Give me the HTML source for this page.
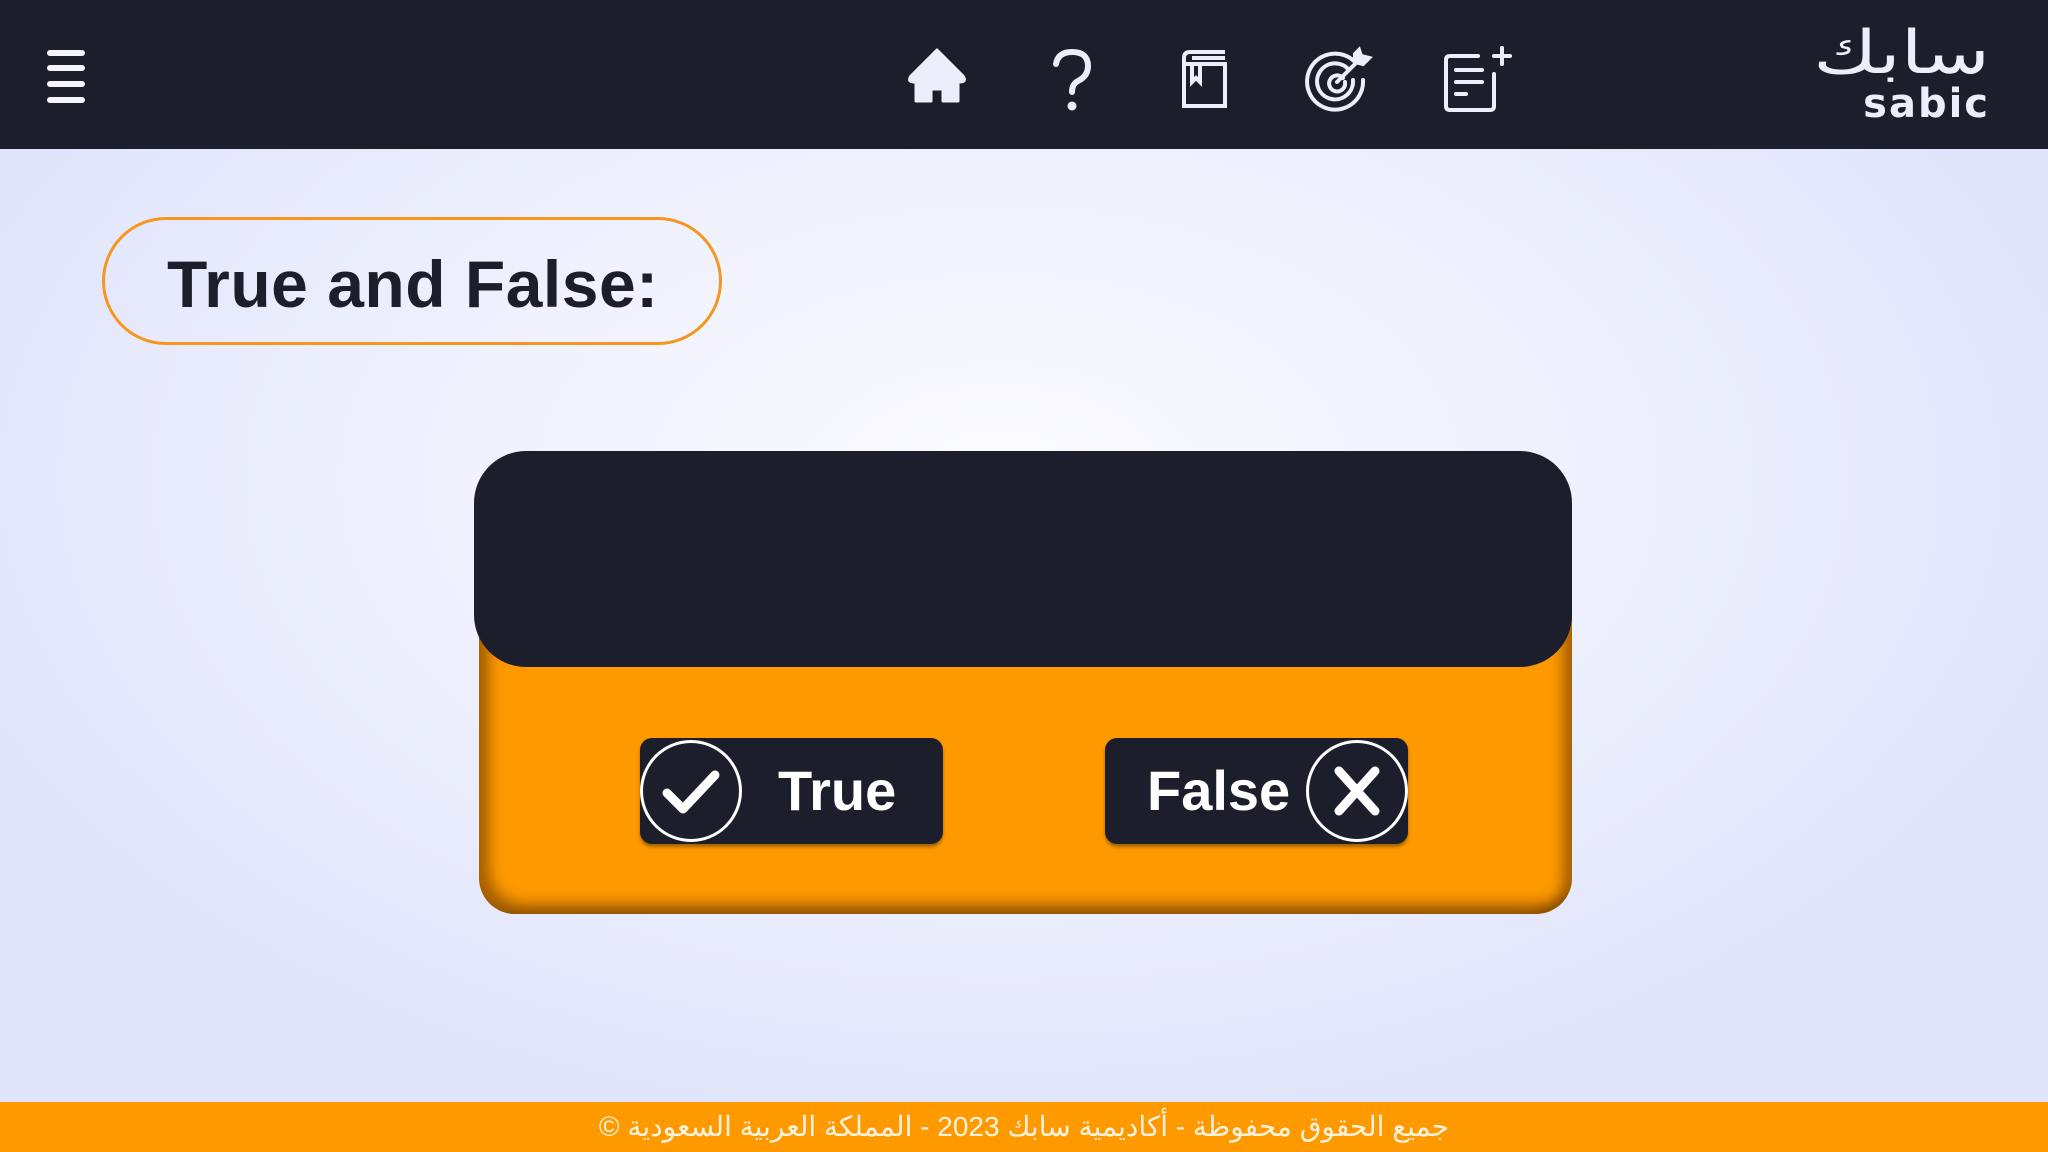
<!DOCTYPE html>
<html><head><meta charset="utf-8"><style>
*{margin:0;padding:0;box-sizing:border-box}
body{width:2048px;height:1152px;overflow:hidden;position:relative;font-family:"Liberation Sans",sans-serif;
background:radial-gradient(ellipse 1100px 650px at 1000px 480px,#fbfbff 0%,#eef0fd 55%,#e1e5fb 100%);}
.hdr{position:absolute;left:0;top:0;width:2048px;height:149px;background:#1c1f2b}
.pill{position:absolute;left:102px;top:217px;width:620px;height:128px;border:3px solid #f7961e;border-radius:64px;}
.pill span{position:absolute;left:62px;top:26px;font-size:66px;font-weight:bold;color:#1c1f2b;letter-spacing:0.5px}
.orange{position:absolute;left:479px;top:600px;width:1093px;height:314px;background:#ff9900;border-radius:0 0 36px 36px;
box-shadow:inset 10px -10px 14px rgba(90,50,0,.55),inset -10px 0 12px rgba(90,50,0,.5);}
.dark{position:absolute;left:474px;top:451px;width:1098px;height:216px;background:#1c1f2b;border-radius:52px}
.btn{position:absolute;top:738px;width:303px;height:106px;background:#1c1f2b;border-radius:12px;color:#fff;font-weight:bold;font-size:56px;box-shadow:0 3px 3px rgba(0,0,0,.35)}
.circ{position:absolute;top:2px;width:102px;height:102px;border:3px solid #fff;border-radius:50%;background:#1c1f2b}
.foot{position:absolute;left:0;top:1102px;width:2048px;height:50px;background:#ff9900;color:#fff3e0;text-align:center;font-size:28px;line-height:50px;font-family:"Liberation Sans","Noto Sans CJK SC",sans-serif}
</style></head><body>
<div class="hdr">
<svg style="position:absolute;left:46px;top:48px" width="40" height="58" viewBox="0 0 40 58"><g stroke="#f2f3fb" stroke-width="6" stroke-linecap="round"><line x1="4" y1="5" x2="36" y2="5"/><line x1="4" y1="20" x2="36" y2="20"/><line x1="4" y1="36" x2="36" y2="36"/><line x1="4" y1="52" x2="36" y2="52"/></g></svg>
<svg style="position:absolute;left:905px;top:46px" width="64" height="60" viewBox="0 0 64 60"><path d="M32 4 L6 30 Q2 36 9 36 L11 36 L11 55 L26 55 L26 43 L38 43 L38 55 L53 55 L53 36 L55 36 Q62 36 58 30 Z" fill="#eceefb" stroke="#eceefb" stroke-width="3" stroke-linejoin="round"/></svg>
<svg style="position:absolute;left:1050px;top:48px" width="44" height="66" viewBox="0 0 44 66"><path d="M6 16 Q8 4 22 4 Q38 4 38 18 Q38 28 28 33 Q22 36 22 44" fill="none" stroke="#eceefb" stroke-width="6" stroke-linecap="round"/><circle cx="22" cy="58" r="4.5" fill="#eceefb"/></svg>
<svg style="position:absolute;left:1180px;top:48px" width="50" height="62" viewBox="0 0 50 62"><g fill="none" stroke="#eceefb" stroke-width="4"><path d="M4 58 V10 Q4 4 10 4 H45"/><path d="M12 10 H45"/><rect x="4" y="16" width="41" height="42"/><path d="M12 16 V34 L16 30 L20 34 V16"/></g></svg>
<svg style="position:absolute;left:1303px;top:46px" width="72" height="68" viewBox="0 0 72 68"><g fill="none" stroke="#eceefb" stroke-width="4" stroke-linecap="round"><path d="M52 16 A28 28 0 1 0 60 34"/><path d="M46 24 A18 18 0 1 0 50 34"/><path d="M40 32 A8 8 0 1 0 42 36"/><path d="M34 36 L58 12"/><path d="M52 8 L52 16 L60 18 L66 12 L58 10 L56 4 Z" fill="#eceefb"/></g></svg>
<svg style="position:absolute;left:1442px;top:44px" width="70" height="68" viewBox="0 0 70 68"><g fill="none" stroke="#eceefb" stroke-width="4" stroke-linecap="round"><path d="M36 12 H8 Q4 12 4 16 V62 Q4 66 8 66 H48 Q52 66 52 62 V30"/><path d="M14 26 H40 M14 38 H40 M14 50 H24"/><path d="M60 4 V20 M52 12 H68"/></g></svg>
<div style="position:absolute;left:1810px;top:20px;width:180px;height:110px;color:#eceefb">
<div style="position:absolute;right:0;top:-2px;font-size:60px;font-family:'DejaVu Sans',sans-serif;transform:scaleX(1.3);transform-origin:right top;white-space:nowrap" dir="rtl">سابك</div>
<div style="position:absolute;right:0;top:64px;font-size:40px;font-weight:bold;font-family:'DejaVu Sans',sans-serif;letter-spacing:2px;line-height:40px">sabic</div>
</div>
</div>
<div class="pill"><span>True and False:</span></div>
<div class="orange"></div>
<div class="dark"></div>
<div class="btn" style="left:640px"><div class="circ" style="left:0"><svg width="96" height="96" viewBox="0 0 96 96"><path d="M24 50 L40 66 L72 32" fill="none" stroke="#fff" stroke-width="9" stroke-linecap="round" stroke-linejoin="round"/></svg></div><span style="position:absolute;left:138px;top:20px">True</span></div>
<div class="btn" style="left:1105px"><span style="position:absolute;left:42px;top:20px">False</span><div class="circ" style="right:0"><svg width="96" height="96" viewBox="0 0 96 96"><path d="M30 28 L66 68 M66 28 L30 68" fill="none" stroke="#fff" stroke-width="9" stroke-linecap="round"/></svg></div></div>
<div class="foot" dir="rtl">جميع الحقوق محفوظة - أكاديمية سابك 2023 - المملكة العربية السعودية ©</div>
</body></html>
